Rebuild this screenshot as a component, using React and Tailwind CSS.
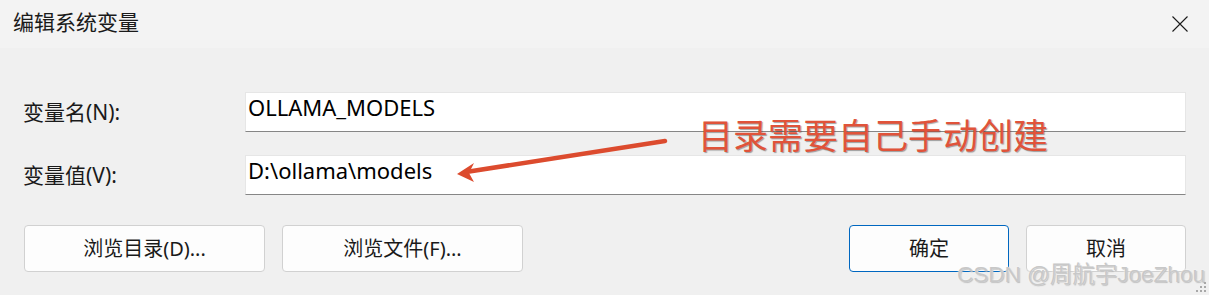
import React from 'react';

const ui = { fontFamily: '"Noto Sans", "Noto Sans CJK SC", sans-serif' };

function Field({ label, value }) {
    return (
        <>
            <div className="flex items-center h-[40px] text-[21px] text-[#1a1a1a] pt-[1px]">{label}</div>
            <div className="h-[40px] bg-white border border-[#e6e6e6] border-b-[#868686] pl-[2px] text-[22px] leading-[28px] text-black">
                {value}
            </div>
        </>
    );
}

function DialogButton({ children, primary, wide }) {
    return (
        <button
            className={
                'h-[47px] rounded-[4px] bg-[#fdfdfd] text-[20px] text-[#1a1a1a] border ' +
                (primary ? 'border-[#0067c0] ' : 'border-[#d1d1d1] ') +
                (wide ? 'w-[241px]' : 'w-[160px]')
            }
        >
            {children}
        </button>
    );
}

export default function App() {
    return (
        <div className="relative w-[1209px] h-[295px] overflow-hidden bg-[#f0f0f0]" style={ui}>
            {/* Title bar */}
            <div className="h-[48px] bg-[#f3f3f3] flex items-center justify-between pl-[13px] pr-[21px]">
                <span className="text-[21px] text-[#1a1a1a] leading-none -mt-[3px]">编辑系统变量</span>
                <svg width="16" height="16" viewBox="0 0 16 16" className="-mt-[1px]">
                    <path d="M0.5 0.5L15.5 15.5M15.5 0.5L0.5 15.5" stroke="#1a1a1a" strokeWidth="1.1" fill="none" />
                </svg>
            </div>

            {/* Body */}
            <div className="px-[23px] pt-[44px]">
                <div className="grid grid-cols-[222px_1fr] gap-y-[23px]">
                    <Field label="变量名(N):" value="OLLAMA_MODELS" />
                    <Field label="变量值(V):" value="D:\ollama\models" />
                </div>

                <div className="mt-[30px] flex justify-between pl-[1px]">
                    <div className="flex gap-[17px]">
                        <DialogButton wide>浏览目录(D)...</DialogButton>
                        <DialogButton wide>浏览文件(F)...</DialogButton>
                    </div>
                    <div className="flex gap-[17px]">
                        <DialogButton primary>确定</DialogButton>
                        <DialogButton>取消</DialogButton>
                    </div>
                </div>
            </div>

            {/* Annotation */}
            <div
                className="absolute left-[698px] top-[114px] text-[35px] leading-[40px] text-[#e0533a] [text-shadow:1px_1px_1px_rgba(0,0,0,0.35)]"
                style={{ fontFamily: '"Noto Sans CJK SC", sans-serif' }}
            >
                目录需要自己手动创建
            </div>
            <svg className="absolute inset-0 pointer-events-none" width="1209" height="295">
                <line x1="665" y1="141" x2="466" y2="172" stroke="#dc4b2e" strokeWidth="4.5" strokeLinecap="round" />
                <polygon points="457,174 474,163 469,173 474,182" fill="#dc4b2e" />
            </svg>

            {/* Watermark */}
            <div
                className="absolute left-[957px] top-[262px] text-[22.5px] leading-[26px] text-[#c8c8c8] [text-shadow:0_0_2px_#ffffff,1px_1px_1px_#b0b0b0]"
                style={{ fontFamily: '"Liberation Sans", "Noto Sans CJK SC", sans-serif' }}
            >
                CSDN @周航宇JoeZhou
            </div>

            {/* Resize grip */}
            <svg className="absolute right-[2px] bottom-[2px]" width="12" height="12" viewBox="0 0 12 12">
                <rect x="9" y="1" width="2" height="2" fill="#a8a8a8" />
                <rect x="5" y="5" width="2" height="2" fill="#a8a8a8" />
                <rect x="9" y="5" width="2" height="2" fill="#a8a8a8" />
                <rect x="1" y="9" width="2" height="2" fill="#a8a8a8" />
                <rect x="5" y="9" width="2" height="2" fill="#a8a8a8" />
                <rect x="9" y="9" width="2" height="2" fill="#a8a8a8" />
            </svg>
        </div>
    );
}
